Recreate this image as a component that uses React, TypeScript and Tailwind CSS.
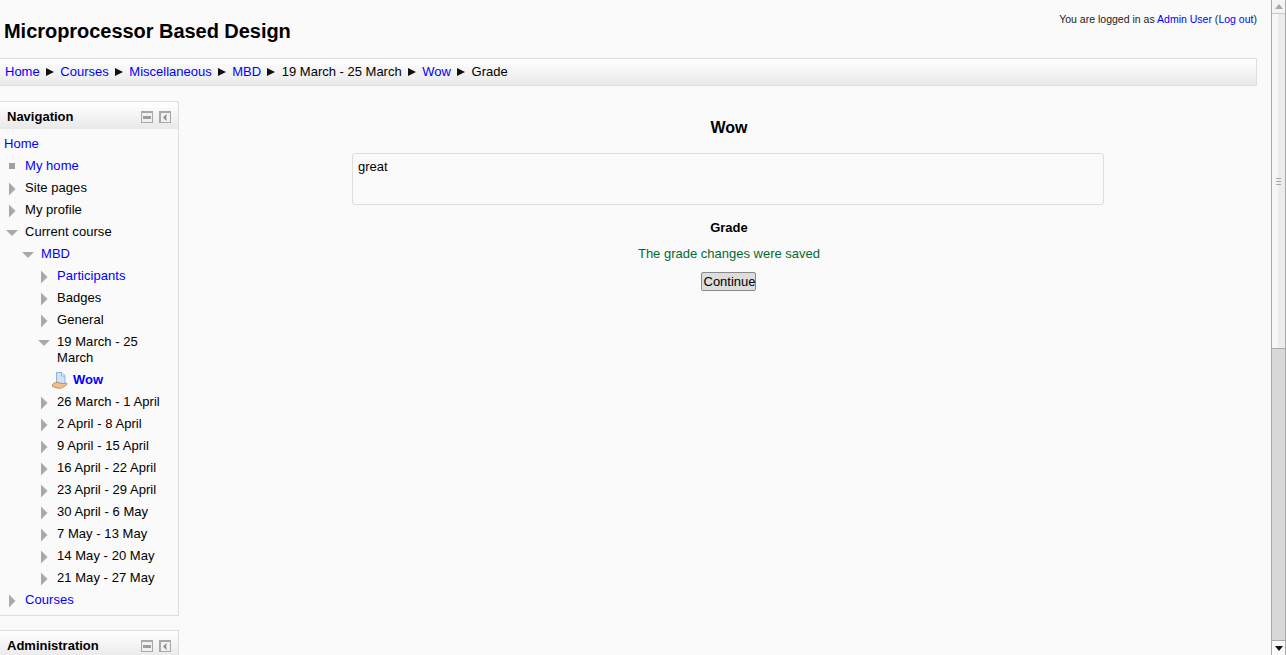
import React from 'react'

type Row = {
  label: string
  depth: number
  icon: 'right' | 'down' | 'square' | 'none' | 'activity'
  link?: boolean
  bold?: boolean
}

const rows: Row[] = [
  { label: 'My home', depth: 0, icon: 'square', link: true },
  { label: 'Site pages', depth: 0, icon: 'right' },
  { label: 'My profile', depth: 0, icon: 'right' },
  { label: 'Current course', depth: 0, icon: 'down' },
  { label: 'MBD', depth: 1, icon: 'down', link: true },
  { label: 'Participants', depth: 2, icon: 'right', link: true },
  { label: 'Badges', depth: 2, icon: 'right' },
  { label: 'General', depth: 2, icon: 'right' },
  { label: '19 March - 25 March', depth: 2, icon: 'down' },
  { label: 'Wow', depth: 3, icon: 'activity', link: true, bold: true },
  { label: '26 March - 1 April', depth: 2, icon: 'right' },
  { label: '2 April - 8 April', depth: 2, icon: 'right' },
  { label: '9 April - 15 April', depth: 2, icon: 'right' },
  { label: '16 April - 22 April', depth: 2, icon: 'right' },
  { label: '23 April - 29 April', depth: 2, icon: 'right' },
  { label: '30 April - 6 May', depth: 2, icon: 'right' },
  { label: '7 May - 13 May', depth: 2, icon: 'right' },
  { label: '14 May - 20 May', depth: 2, icon: 'right' },
  { label: '21 May - 27 May', depth: 2, icon: 'right' },
  { label: 'Courses', depth: 0, icon: 'right', link: true },
]

const crumbs = [
  { label: 'Home', link: true },
  { label: 'Courses', link: true },
  { label: 'Miscellaneous', link: true },
  { label: 'MBD', link: true },
  { label: '19 March - 25 March', link: false },
  { label: 'Wow', link: true },
  { label: 'Grade', link: false },
]

const depthPad = ['pl-0', 'pl-[16px]', 'pl-[32px]', 'pl-[48px]']

const TreeIcon = ({ kind }: { kind: Row['icon'] }) => {
  if (kind === 'right') {
    return (
      <svg width="20" height="16" viewBox="0 0 20 16" className="shrink-0">
        <polygon points="9,2.500 15.500,9 9,15.500" fill="#a9a9a9" />
      </svg>
    )
  }
  if (kind === 'down') {
    return (
      <svg width="20" height="16" viewBox="0 0 20 16" className="shrink-0">
        <polygon points="6,6 18,6 12,12" fill="#a9a9a9" />
      </svg>
    )
  }
  if (kind === 'square') {
    return (
      <svg width="20" height="16" viewBox="0 0 20 16" className="shrink-0">
        <rect x="9" y="5" width="6" height="6" fill="#a0a0a0" />
      </svg>
    )
  }
  return (
    <svg width="20" height="18" viewBox="0 0 20 18" className="-mb-[2px] shrink-0">
      <path d="M8.500 0.500h5.500l3 3v9.500h-8.500z" fill="#cfe2f8" stroke="#8db2dc" strokeWidth="1" />
      <path d="M13.500 0.500v3.500h3.500" fill="#f4f8fd" stroke="#8db2dc" strokeWidth="1" />
      <path d="M4.500 12.500c1.500-2 4-2.500 6.500-1.800l3 0.800 4-0.300c1.200 0 1.500 1 0.500 1.600l-4 2.800c-1.800 0.900-3.800 0.800-5.500 0.300l-4.500-1.400z" fill="#efbf8c" stroke="#ad7f4e" strokeWidth="0.8" />
    </svg>
  )
}

const BlockControls = () => (
  <div className="flex gap-[6px]">
    <svg width="12" height="12" viewBox="0 0 12 12">
      <rect width="12" height="12" fill="#a8a8a8" />
      <rect x="1" y="2" width="10" height="9" fill="#f1f1f1" />
      <rect x="2" y="5" width="8" height="3" fill="#9c9c9c" />
    </svg>
    <svg width="12" height="12" viewBox="0 0 12 12">
      <rect width="12" height="12" fill="#a8a8a8" />
      <rect x="2" y="2" width="9" height="9" fill="#f1f1f1" />
      <polygon points="7.500,3 4,6.500 7.500,10" fill="#8e8e8e" />
      <polygon points="9,4.500 7,6.500 9,8.500" fill="#f1f1f1" />
    </svg>
  </div>
)

const BlockHeader = ({ title }: { title: string }) => (
  <div className="flex h-[27px] items-center justify-between bg-gradient-to-b from-white to-[#e9e9e9] pl-[7px] pr-[7px] pt-[2px]">
    <h2 className="text-[13px] font-bold text-black">{title}</h2>
    <BlockControls />
  </div>
)

const Scrollbar = () => (
  <div className="flex h-[655px] w-[15px] shrink-0 flex-col border-x border-[#a8a8a8] bg-[#fafafa]">
    {/* bouton haut */}
    <div className="flex h-[14px] shrink-0 items-center justify-center rounded-t-[3px] border-b border-[#c8c8c8] bg-[#f4f4f2]">
      <svg width="8" height="5" viewBox="0 0 8 5">
        <polygon points="4,0 8,5 0,5" fill="#a8a8a8" />
      </svg>
    </div>
    {/* thumb */}
    <div className="flex h-[334px] shrink-0 items-center justify-center bg-gradient-to-r from-[#f7f6f4] from-50% to-[#ececea] to-50%">
      <div className="flex flex-col gap-[2px]">
        <div className="h-px w-[5px] bg-[#a8a8a8]" />
        <div className="h-px w-[5px] bg-[#a8a8a8]" />
        <div className="h-px w-[5px] bg-[#a8a8a8]" />
      </div>
    </div>
    {/* piste */}
    <div className="flex-1 border-t border-[#a8a8a8] bg-[#d8d8d6]" />
    {/* bouton bas */}
    <div className="flex h-[15px] shrink-0 items-center justify-center rounded-b-[3px] border-t border-[#a8a8a8] bg-[#fafafa]">
      <svg width="8" height="5" viewBox="0 0 8 5">
        <polygon points="0,0 8,0 4,5" fill="#111" />
      </svg>
    </div>
  </div>
)

const App = () => {
  return (
    <div className="flex h-[655px] w-[1286px] overflow-hidden bg-[#fafafa] font-['Liberation_Sans',Arial,sans-serif] text-[13px] text-black">
      <div className="w-[1271px] shrink-0">
        <div className="w-[1257px]">
          {/* Header */}
          <header className="flex h-[58px] items-start justify-between">
            <h1 className="pl-[4px] pt-[19px] text-[20px] leading-[24px] font-bold tracking-[-0.04px]">Microprocessor Based Design</h1>
            <div className="pt-[13px] text-[10.53px] leading-[13px] text-[#222]">
              You are logged in as <a className="text-[#0000ff]">Admin User</a> (<a className="text-[#0000ff]">Log out</a>)
            </div>
          </header>

          {/* Breadcrumb */}
          <nav className="flex h-[28px] items-center gap-[5.3px] border border-l-0 border-[#dddddd] bg-gradient-to-b from-white to-[#e9e9e9] pl-[5px]">
            {crumbs.map((c, i) => (
              <React.Fragment key={c.label + i}>
                {i > 0 && (
                  <svg width="10" height="10" viewBox="0 0 10 10" className="shrink-0">
                    <polygon points="1,1 9,5 1,9" fill="#111" />
                  </svg>
                )}
                <span className={c.link ? 'text-[#0000ff]' : 'text-black'}>{c.label}</span>
              </React.Fragment>
            ))}
          </nav>

          <div className="mt-[15px] flex">
            {/* Kolom kiri */}
            <aside className="w-[179px] shrink-0">
              <section className="border border-l-0 border-[#dddddd]">
                <BlockHeader title="Navigation" />
                <div className="pb-[4px] pl-[4px] pt-[4px] tracking-[0.05px]">
                  <div className="py-[3px] leading-4 text-[#0000ff]">Home</div>
                  {rows.map((r) => (
                    <div key={r.label} className={`flex py-[3px] leading-4 ${depthPad[r.depth]}`}>
                      <div className="-ml-[4px]">
                        <TreeIcon kind={r.icon} />
                      </div>
                      <span
                        className={`ml-[5px] pr-[8px] ${r.link ? 'text-[#0000ff]' : 'text-black'} ${r.bold ? 'font-bold' : ''}`}
                      >
                        {r.label}
                      </span>
                    </div>
                  ))}
                </div>
              </section>
              <section className="mt-[14px] border border-l-0 border-[#dddddd]">
                <BlockHeader title="Administration" />
              </section>
            </aside>

            {/* Konten utama */}
            <main className="flex flex-1 flex-col items-center pl-[20px]">
              <h2 className="mt-[17px] pl-[2px] text-[16px] leading-[20px] font-bold">Wow</h2>
              <div className="mt-[15px] h-[52px] w-[752px] rounded-[3px] border border-[#dddddd] px-[5px] py-[5px] leading-4">
                great
              </div>
              <h3 className="mt-[15px] pl-[2px] leading-4 font-bold">Grade</h3>
              <p className="mt-[10px] pl-[2px] leading-4 text-[#006b2e]">The grade changes were saved</p>
              <button className="mt-[10px] h-[19px] w-[55px] rounded-[2px] border border-[#8a8a8a] bg-[#dddddd] pl-[2px] text-[13px] leading-none text-black">
                Continue
              </button>
            </main>
          </div>
        </div>
      </div>
      <Scrollbar />
    </div>
  )
}

export default App
